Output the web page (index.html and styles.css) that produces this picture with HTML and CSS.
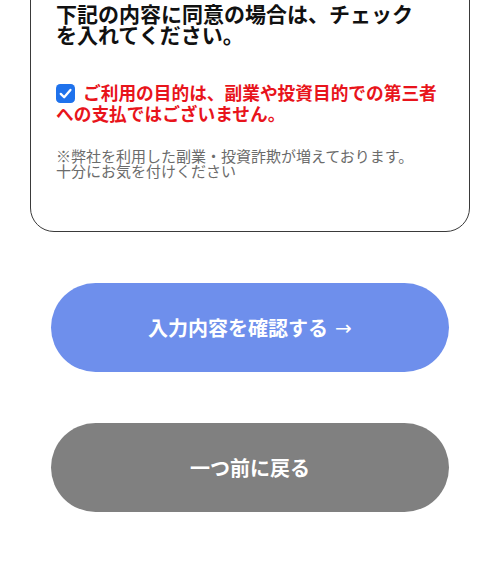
FILE: index.html
```html
<!DOCTYPE html>
<html lang="ja">
<head>
<meta charset="utf-8">
<link rel="stylesheet" href="styles.css">
</head>
<body>
<div class="page">
  <section class="card">
    <h2 class="card-title">下記の内容に同意の場合は、チェック<br>を入れてください。</h2>
    <p class="agree"><span class="check"><svg viewBox="0 0 20 20" width="19" height="19"><rect x="0" y="0" width="20" height="20" rx="4.5" fill="#1f72ec"/><path d="M5 10.4 L8.6 14 L15.2 6.2" fill="none" stroke="#fff" stroke-width="2.4" stroke-linecap="round" stroke-linejoin="round"/></svg></span>ご利用の目的は、副業や投資目的での第三者<br>への支払ではございません。</p>
    <p class="note">※弊社を利用した副業・投資詐欺が増えております。<br>十分にお気を付けください</p>
  </section>
  <div class="actions">
    <button class="btn btn-primary">入力内容を確認する <span class="arrow">→</span></button>
    <button class="btn btn-back">一つ前に戻る</button>
  </div>
</div>
</body>
</html>
```

FILE: styles.css
```css
* { box-sizing: border-box; }
html, body { margin: 0; padding: 0; background: #fff; }
body {
  font-family: "Noto Sans CJK JP", "Noto Sans", sans-serif;
  overflow: hidden;
}
.page {
  width: 500px;
  height: 583px;
  display: flex;
  flex-direction: column;
  align-items: center;
}
.card {
  width: 440px;
  margin-top: -42px;
  padding: 44px 26px 53px 25px;
  border: 1.6px solid #3a3a3a;
  border-radius: 24px;
}
.card-title {
  margin: 0;
  font-size: 21px;
  line-height: 21px;
  font-weight: 700;
  color: #111;
  white-space: nowrap;
}
.agree {
  margin: 37px 0 0 0;
  font-size: 17.7px;
  line-height: 20px;
  font-weight: 700;
  color: #e8141b;
  white-space: nowrap;
}
.check {
  display: inline-block;
  width: 19px;
  height: 19px;
  margin-right: 8px;
  vertical-align: -3px;
}
.check svg { display: block; }
.note {
  margin: 25px 0 0 0;
  font-size: 15px;
  line-height: 15px;
  color: #6b6b6b;
  white-space: nowrap;
}
.actions {
  display: flex;
  flex-direction: column;
  gap: 51px;
  margin-top: 51px;
}
.btn {
  width: 398px;
  height: 89px;
  border: none;
  border-radius: 45px;
  font-family: "Noto Sans CJK JP", "Noto Sans", sans-serif;
  font-size: 20px;
  font-weight: 700;
  color: #fff;
  display: flex;
  align-items: center;
  justify-content: center;
  padding: 0;
}
.btn-primary { background: #6e8fec; }
.btn-back { background: #808080; }
.arrow {
  font-weight: 400;
  margin-left: 7px;
  font-family: "DejaVu Sans", sans-serif;
  font-size: 20px;
}
```
